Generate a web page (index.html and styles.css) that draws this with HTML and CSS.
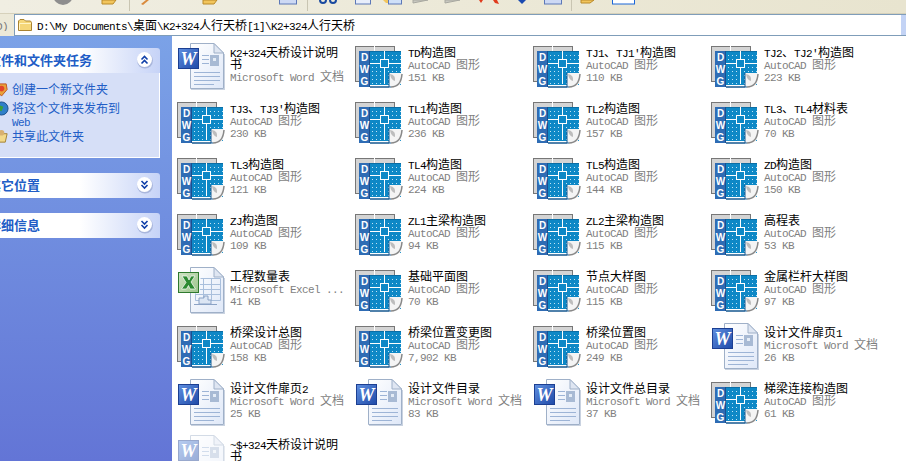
FILE: index.html
```html
<!DOCTYPE html>
<html lang="zh-CN">
<head>
<meta charset="utf-8">
<title>K2+324人行天桥</title>
<link rel="stylesheet" href="styles.css">
</head>
<body>
<svg class="defs" aria-hidden="true">
  <defs>
    <linearGradient id="wblue" x1="0" y1="0" x2="1" y2="1"><stop offset="0" stop-color="#5f8fe0"/><stop offset="1" stop-color="#1f4aa8"/></linearGradient>
    <linearGradient id="page" x1="0" y1="0" x2="1" y2="1"><stop offset="0" stop-color="#ffffff"/><stop offset="1" stop-color="#dfe8f8"/></linearGradient>
    <linearGradient id="xgreen" x1="0" y1="0" x2="1" y2="1"><stop offset="0" stop-color="#cfe3c4"/><stop offset="1" stop-color="#9cc48c"/></linearGradient>
    <pattern id="dots" width="4" height="4" patternUnits="userSpaceOnUse"><rect width="4" height="4" fill="#0e88c6"/><rect x="1" y="1" width="1" height="1" fill="#bfe4f5"/></pattern>
    <symbol id="dwg" viewBox="0 0 48 48">
      <rect x="0.5" y="4.5" width="39" height="35" fill="#d4d4d4" stroke="#777"/>
      <rect x="19" y="4" width="1" height="5" fill="#fff"/>
      <rect x="4" y="9" width="11" height="36" fill="#2f6cb4"/>
      <rect x="15" y="9" width="31" height="34" fill="url(#dots)"/>
      <rect x="14" y="9" width="1" height="36" fill="#1b4f8f"/>
      <rect x="15" y="9" width="31" height="1" fill="#0a6ea6"/>
      <rect x="29" y="9" width="1" height="33" fill="#fff"/>
      <rect x="15" y="21" width="31" height="1" fill="#fff"/>
      <rect x="25.5" y="17.5" width="8" height="8" fill="#0e88c6" stroke="#fff"/>
      <text class="dwg-text" x="9.5" y="19">D</text>
      <text class="dwg-text" x="9.5" y="31">W</text>
      <text class="dwg-text" x="9.5" y="43">G</text>
      <path d="M34 31H47V36Q47 45 39 45H34Z" fill="#f4f4f4"/>
      <path d="M34 31V45H15V45H36" fill="none" stroke="#16598f"/>
      <path d="M36 45Q46 45 47 32" fill="none" stroke="#888" stroke-width="1.5"/>
      <path d="M35 32Q41 33 40 39Q36 38 35 32Z" fill="#bdbdbd"/>
    </symbol>
    <symbol id="doc" viewBox="0 0 48 48">
      <path d="M13.5 1.5H37L46.5 11V46.5H13.5Z" fill="url(#page)" stroke="#9fb0c8"/>
      <path d="M37 1.5V11H46.5Z" fill="#dfe6f2" stroke="#9fb0c8"/>
      <rect x="47" y="12" width="1" height="35" fill="#c9d2e0"/>
      <rect x="14" y="47" width="34" height="1" fill="#c9d2e0"/>
    </symbol>
    <symbol id="word" viewBox="0 0 48 48">
      <use href="#doc" width="48" height="48"/>
      <g fill="#9db4d6">
        <rect x="25" y="13" width="7" height="1"/><rect x="25" y="17" width="7" height="1"/><rect x="25" y="21" width="7" height="1"/>
        <rect x="17" y="30" width="26" height="1"/><rect x="17" y="34" width="26" height="1"/><rect x="17" y="38" width="26" height="1"/><rect x="17" y="42" width="20" height="1"/>
      </g>
      <rect x="33" y="13" width="9" height="11" fill="#a8bad4"/>
      <rect x="36" y="16" width="3" height="3" fill="#e4ecf6"/>
      <rect x="1.5" y="6.5" width="20" height="20" fill="url(#wblue)" stroke="#1c3f92"/>
      <text class="word-text" x="11.5" y="23">W</text>
    </symbol>
    <symbol id="excel" viewBox="0 0 48 48">
      <use href="#doc" width="48" height="48"/>
      <g fill="none" stroke="#a9bfdc">
        <path d="M23.5 12.5H43.5V34.5H18.5V27.5"/>
        <path d="M23 18.5H43.5M23 23.5H43.5M18 28.5H43.5M26.5 12V34M34.5 12V34"/>
      </g>
      <path d="M22 38V32H27V30H31V34H34V38Z" fill="#dce6f4" stroke="#8ba3c6"/>
      <rect x="17" y="38" width="23" height="1" fill="#8ba3c6"/>
      <rect x="1.5" y="6.5" width="20" height="20" fill="url(#xgreen)" stroke="#2f7a2f"/>
      <path d="M5 10H10L12 14L14 10H18L14 16L18.5 23H13L11.5 19.5L9.5 23H4.5L9 16.5Z" fill="#2d8a32" stroke="#fff" stroke-width=".7"/>
    </symbol>
    <symbol id="up" viewBox="0 0 18 18">
      <circle cx="9" cy="9.5" r="8" fill="#a9b6dc"/><circle cx="8.5" cy="8.5" r="7.5" fill="#fff"/>
      <path d="M5.5 8.5L8.5 5.5L11.5 8.5M5.5 12.5L8.5 9.5L11.5 12.5" fill="none" stroke="#0f3fa8" stroke-width="1.6"/>
    </symbol>
    <symbol id="down" viewBox="0 0 18 18">
      <circle cx="9" cy="9.5" r="8" fill="#a9b6dc"/><circle cx="8.5" cy="8.5" r="7.5" fill="#fff"/>
      <path d="M5.5 5L8.5 8L11.5 5M5.5 9L8.5 12L11.5 9" fill="none" stroke="#0f3fa8" stroke-width="1.6"/>
    </symbol>
  </defs>
</svg>

<header class="toolbar">
  <svg class="toolbar-art" width="906" height="13" viewBox="0 0 906 13" aria-hidden="true">
    <circle cx="63" cy="-5" r="10" fill="#8e8e8e"/>
    <path d="M102 0H116L113 4H102Z" fill="#f2c55c" stroke="#b98a2a"/>
    <rect x="129" y="0" width="1" height="11" fill="#c9c5b2"/>
    <path d="M141 4L146 0H149L143 5Z" fill="#d98a3c"/>
    <path d="M203 0H217L214 4H203Z" fill="#f2c55c" stroke="#b98a2a"/>
    <rect x="279.500" y="-5" width="17" height="9" fill="#cdd9f4" stroke="#5c78b8"/>
    <rect x="307" y="0" width="1" height="11" fill="#c9c5b2"/>
    <circle cx="323" cy="0" r="3" fill="none" stroke="#1a4aa0" stroke-width="2"/>
    <circle cx="333" cy="0" r="3" fill="none" stroke="#1a4aa0" stroke-width="2"/>
    <rect x="355.500" y="-5" width="15" height="9" fill="#e8eefb" stroke="#5c78b8"/>
    <path d="M383 0H392V3H386Z" fill="#f2c55c"/>
    <rect x="388.500" y="-5" width="13" height="9" fill="#cfe0f8" stroke="#5c78b8"/>
    <path d="M413 3L428 0H413Z" fill="#c8c8c0" stroke="#a8a8a0"/>
    <path d="M445 3L460 0H445Z" fill="#c8c8c0" stroke="#a8a8a0"/>
    <path d="M479 0H483L481 3Z" fill="#e03a1c"/>
    <path d="M493 0H497L499 4L495 3Z" fill="#e03a1c"/>
    <path d="M518 0H526L522 4Z" fill="#1a4ab0"/>
    <rect x="544.500" y="-5" width="17" height="9" fill="#cdd9f4" stroke="#5c78b8"/>
    <rect x="571" y="0" width="1" height="11" fill="#c9c5b2"/>
    <path d="M581 0H594L590 3H581Z" fill="#f2c55c" stroke="#b98a2a"/>
    <rect x="612.500" y="-5" width="22" height="9" fill="#fff" stroke="#1a66d8"/>
  </svg>
</header>

<div class="addressbar">
  <span class="drive"><span class="lat">D)</span></span>
  <div class="address-field">
    <svg class="folder" width="16" height="14" viewBox="0 0 16 14" aria-hidden="true">
      <path d="M1.500 12.500V3L3 1.500H7L8.500 3H13.500L14.500 4.500V12.500Z" fill="#f5d678" stroke="#a98330"/>
      <path d="M2.500 12V5.500H14" fill="none" stroke="#fff4c4"/>
    </svg>
    <span class="address-text"><span class="lat">D:\My Documents\</span>桌面<span class="lat">\K2+324</span>人行天桥<span class="lat">[1]\K2+324</span>人行天桥</span>
    <span class="address-drop"></span>
  </div>
</div>

<main class="main">
  <aside class="sidebar">
    <section class="panel">
      <h2 class="panel-head">文件和文件夹任务<svg class="chev"><use href="#up"/></svg></h2>
      <ul class="tasks">
        <li class="task">
          <svg class="task-icon" viewBox="0 0 16 16" aria-hidden="true"><path d="M3 2H13L14 8L8 15L2 8Z" fill="#e8a33a" stroke="#c0531e"/><circle cx="8" cy="7" r="3" fill="#e2442c"/></svg>
          <span>创建一个新文件夹</span>
        </li>
        <li class="task task-tall">
          <svg class="task-icon" viewBox="0 0 16 16" aria-hidden="true"><circle cx="8" cy="8" r="7" fill="#2f7fc8" stroke="#1a4f8a"/><path d="M4 4L10 6L8 11L5 10Z" fill="#3aa03a"/></svg>
          <span>将这个文件夹发布到<br><span class="lat">Web</span></span>
        </li>
        <li class="task">
          <svg class="task-icon" viewBox="0 0 16 16" aria-hidden="true"><path d="M2 5H14L12 14H4Z" fill="#f2d98a" stroke="#a07f30"/><circle cx="8" cy="4" r="3" fill="#d8b070"/></svg>
          <span>共享此文件夹</span>
        </li>
      </ul>
    </section>
    <section class="panel">
      <h2 class="panel-head">其它位置<svg class="chev"><use href="#down"/></svg></h2>
    </section>
    <section class="panel">
      <h2 class="panel-head">详细信息<svg class="chev"><use href="#down"/></svg></h2>
    </section>
  </aside>

  <div class="files">
    <div class="file"><svg class="icon"><use href="#word"/></svg><div class="meta"><div class="name"><span class="lat">K2+324</span>天桥设计说明书</div><div class="info"><span class="lat">Microsoft Word </span>文档</div></div></div>
    <div class="file"><svg class="icon"><use href="#dwg"/></svg><div class="meta"><div class="name"><span class="lat">TD</span>构造图</div><div class="info"><span class="lat">AutoCAD </span>图形</div><div class="info"><span class="lat">151 KB</span></div></div></div>
    <div class="file"><svg class="icon"><use href="#dwg"/></svg><div class="meta"><div class="name"><span class="lat">TJ1</span>、<span class="lat">TJ1′</span>构造图</div><div class="info"><span class="lat">AutoCAD </span>图形</div><div class="info"><span class="lat">110 KB</span></div></div></div>
    <div class="file"><svg class="icon"><use href="#dwg"/></svg><div class="meta"><div class="name"><span class="lat">TJ2</span>、<span class="lat">TJ2′</span>构造图</div><div class="info"><span class="lat">AutoCAD </span>图形</div><div class="info"><span class="lat">223 KB</span></div></div></div>

    <div class="file"><svg class="icon"><use href="#dwg"/></svg><div class="meta"><div class="name"><span class="lat">TJ3</span>、<span class="lat">TJ3′</span>构造图</div><div class="info"><span class="lat">AutoCAD </span>图形</div><div class="info"><span class="lat">230 KB</span></div></div></div>
    <div class="file"><svg class="icon"><use href="#dwg"/></svg><div class="meta"><div class="name"><span class="lat">TL1</span>构造图</div><div class="info"><span class="lat">AutoCAD </span>图形</div><div class="info"><span class="lat">236 KB</span></div></div></div>
    <div class="file"><svg class="icon"><use href="#dwg"/></svg><div class="meta"><div class="name"><span class="lat">TL2</span>构造图</div><div class="info"><span class="lat">AutoCAD </span>图形</div><div class="info"><span class="lat">157 KB</span></div></div></div>
    <div class="file"><svg class="icon"><use href="#dwg"/></svg><div class="meta"><div class="name"><span class="lat">TL3</span>、<span class="lat">TL4</span>材料表</div><div class="info"><span class="lat">AutoCAD </span>图形</div><div class="info"><span class="lat">70 KB</span></div></div></div>

    <div class="file"><svg class="icon"><use href="#dwg"/></svg><div class="meta"><div class="name"><span class="lat">TL3</span>构造图</div><div class="info"><span class="lat">AutoCAD </span>图形</div><div class="info"><span class="lat">121 KB</span></div></div></div>
    <div class="file"><svg class="icon"><use href="#dwg"/></svg><div class="meta"><div class="name"><span class="lat">TL4</span>构造图</div><div class="info"><span class="lat">AutoCAD </span>图形</div><div class="info"><span class="lat">224 KB</span></div></div></div>
    <div class="file"><svg class="icon"><use href="#dwg"/></svg><div class="meta"><div class="name"><span class="lat">TL5</span>构造图</div><div class="info"><span class="lat">AutoCAD </span>图形</div><div class="info"><span class="lat">144 KB</span></div></div></div>
    <div class="file"><svg class="icon"><use href="#dwg"/></svg><div class="meta"><div class="name"><span class="lat">ZD</span>构造图</div><div class="info"><span class="lat">AutoCAD </span>图形</div><div class="info"><span class="lat">150 KB</span></div></div></div>

    <div class="file"><svg class="icon"><use href="#dwg"/></svg><div class="meta"><div class="name"><span class="lat">ZJ</span>构造图</div><div class="info"><span class="lat">AutoCAD </span>图形</div><div class="info"><span class="lat">109 KB</span></div></div></div>
    <div class="file"><svg class="icon"><use href="#dwg"/></svg><div class="meta"><div class="name"><span class="lat">ZL1</span>主梁构造图</div><div class="info"><span class="lat">AutoCAD </span>图形</div><div class="info"><span class="lat">94 KB</span></div></div></div>
    <div class="file"><svg class="icon"><use href="#dwg"/></svg><div class="meta"><div class="name"><span class="lat">ZL2</span>主梁构造图</div><div class="info"><span class="lat">AutoCAD </span>图形</div><div class="info"><span class="lat">115 KB</span></div></div></div>
    <div class="file"><svg class="icon"><use href="#dwg"/></svg><div class="meta"><div class="name">高程表</div><div class="info"><span class="lat">AutoCAD </span>图形</div><div class="info"><span class="lat">53 KB</span></div></div></div>

    <div class="file"><svg class="icon"><use href="#excel"/></svg><div class="meta"><div class="name">工程数量表</div><div class="info"><span class="lat">Microsoft Excel ...</span></div><div class="info"><span class="lat">41 KB</span></div></div></div>
    <div class="file"><svg class="icon"><use href="#dwg"/></svg><div class="meta"><div class="name">基础平面图</div><div class="info"><span class="lat">AutoCAD </span>图形</div><div class="info"><span class="lat">70 KB</span></div></div></div>
    <div class="file"><svg class="icon"><use href="#dwg"/></svg><div class="meta"><div class="name">节点大样图</div><div class="info"><span class="lat">AutoCAD </span>图形</div><div class="info"><span class="lat">115 KB</span></div></div></div>
    <div class="file"><svg class="icon"><use href="#dwg"/></svg><div class="meta"><div class="name">金属栏杆大样图</div><div class="info"><span class="lat">AutoCAD </span>图形</div><div class="info"><span class="lat">97 KB</span></div></div></div>

    <div class="file"><svg class="icon"><use href="#dwg"/></svg><div class="meta"><div class="name">桥梁设计总图</div><div class="info"><span class="lat">AutoCAD </span>图形</div><div class="info"><span class="lat">158 KB</span></div></div></div>
    <div class="file"><svg class="icon"><use href="#dwg"/></svg><div class="meta"><div class="name">桥梁位置变更图</div><div class="info"><span class="lat">AutoCAD </span>图形</div><div class="info"><span class="lat">7,902 KB</span></div></div></div>
    <div class="file"><svg class="icon"><use href="#dwg"/></svg><div class="meta"><div class="name">桥梁位置图</div><div class="info"><span class="lat">AutoCAD </span>图形</div><div class="info"><span class="lat">249 KB</span></div></div></div>
    <div class="file"><svg class="icon"><use href="#word"/></svg><div class="meta"><div class="name">设计文件扉页<span class="lat">1</span></div><div class="info"><span class="lat">Microsoft Word </span>文档</div><div class="info"><span class="lat">26 KB</span></div></div></div>

    <div class="file"><svg class="icon"><use href="#word"/></svg><div class="meta"><div class="name">设计文件扉页<span class="lat">2</span></div><div class="info"><span class="lat">Microsoft Word </span>文档</div><div class="info"><span class="lat">25 KB</span></div></div></div>
    <div class="file"><svg class="icon"><use href="#word"/></svg><div class="meta"><div class="name">设计文件目录</div><div class="info"><span class="lat">Microsoft Word </span>文档</div><div class="info"><span class="lat">83 KB</span></div></div></div>
    <div class="file"><svg class="icon"><use href="#word"/></svg><div class="meta"><div class="name">设计文件总目录</div><div class="info"><span class="lat">Microsoft Word </span>文档</div><div class="info"><span class="lat">37 KB</span></div></div></div>
    <div class="file"><svg class="icon"><use href="#dwg"/></svg><div class="meta"><div class="name">梯梁连接构造图</div><div class="info"><span class="lat">AutoCAD </span>图形</div><div class="info"><span class="lat">61 KB</span></div></div></div>

    <div class="file"><svg class="icon faded"><use href="#word"/></svg><div class="meta"><div class="name"><span class="lat">~$+324</span>天桥设计说明书</div><div class="info"><span class="lat">Microsoft Word </span>文档</div></div></div>
  </div>
</main>
</body>
</html>
```

FILE: styles.css
```css
* { box-sizing: border-box; }

html, body {
  margin: 0;
  height: 100%;
  overflow: hidden;
}

body {
  display: flex;
  flex-direction: column;
  font: 12px/12px "Noto Sans CJK SC", "Liberation Sans", sans-serif;
  color: #000;
  background: #fff;
}

.defs {
  position: absolute;
  width: 0;
  height: 0;
}

.lat {
  font-family: "Liberation Mono", monospace;
  font-size: 11px;
  letter-spacing: -0.6px;
  line-height: 0;
  white-space: pre;
}

.toolbar {
  flex: none;
  height: 14px;
  background: linear-gradient(90deg, #f0eee2 0%, #ece9d8 50%, #e8e4cf 100%);
  border-bottom: 1px solid #d6d1bb;
}

.toolbar-art {
  display: block;
}

.addressbar {
  flex: none;
  height: 22px;
  display: flex;
  background: #ece9d8;
}

.drive {
  flex: none;
  width: 14px;
  align-self: center;
  overflow: hidden;
  text-indent: -4px;
  color: #777;
}

.address-field {
  flex: 1;
  display: flex;
  align-items: center;
  gap: 4px;
  padding-left: 2px;
  background: #fff;
  border-top: 1px solid #7f9db9;
  border-bottom: 1px solid #7f9db9;
  border-left: 1px solid #7f9db9;
}

.folder {
  flex: none;
}

.address-text {
  flex: 1;
  white-space: nowrap;
}

.address-drop {
  width: 5px;
  align-self: stretch;
  background: #c3d3f5;
}

.main {
  flex: 1;
  min-height: 0;
  display: flex;
}

.sidebar {
  flex: none;
  width: 172px;
  padding: 12px 12px 0 0;
  overflow: hidden;
  background: linear-gradient(180deg, #7ba2e7 0%, #6375d6 100%);
}

.panel {
  margin-bottom: 15px;
}

.panel-head {
  position: relative;
  height: 25px;
  margin: 0;
  text-indent: -12px;
  font-size: 13px;
  line-height: 23px;
  font-weight: bold;
  white-space: nowrap;
  color: #215dc6;
  background: linear-gradient(90deg, #fff 50%, #c6d3f7 100%);
  border-top-right-radius: 3px;
}

.chev {
  position: absolute;
  top: 3px;
  right: 6px;
  width: 18px;
  height: 18px;
}

.tasks {
  height: 85px;
  margin: 0;
  padding: 9px 0 0 0;
  list-style: none;
  background: #d6dff7;
  border-right: 1px solid #fff;
  border-bottom: 1px solid #fff;
}

.task {
  display: flex;
  gap: 3px;
  margin-bottom: 6px;
  color: #215dc6;
  line-height: 13px;
}

.task-tall {
  margin-bottom: 2px;
}

.task-icon {
  flex: none;
  width: 15px;
  height: 15px;
  margin: 0 0 -2px -6px;
}

.files {
  flex: 1;
  display: grid;
  grid-template-columns: repeat(4, 178px);
  grid-auto-rows: 56px;
  padding: 2px 0 0 5px;
}

.file {
  display: flex;
  align-items: center;
  gap: 5px;
}

.icon {
  flex: none;
  width: 48px;
  height: 48px;
}

.faded {
  opacity: 0.45;
}

.meta {
  width: 116px;
  margin-top: -4px;
}

.name {
  color: #000;
}

.info {
  color: #7f7f7f;
}

.dwg-text {
  font: bold 10px "Liberation Sans", sans-serif;
  fill: #fff;
  text-anchor: middle;
}

.word-text {
  font: italic bold 18px "Liberation Serif", serif;
  fill: #fff;
  text-anchor: middle;
}
```
